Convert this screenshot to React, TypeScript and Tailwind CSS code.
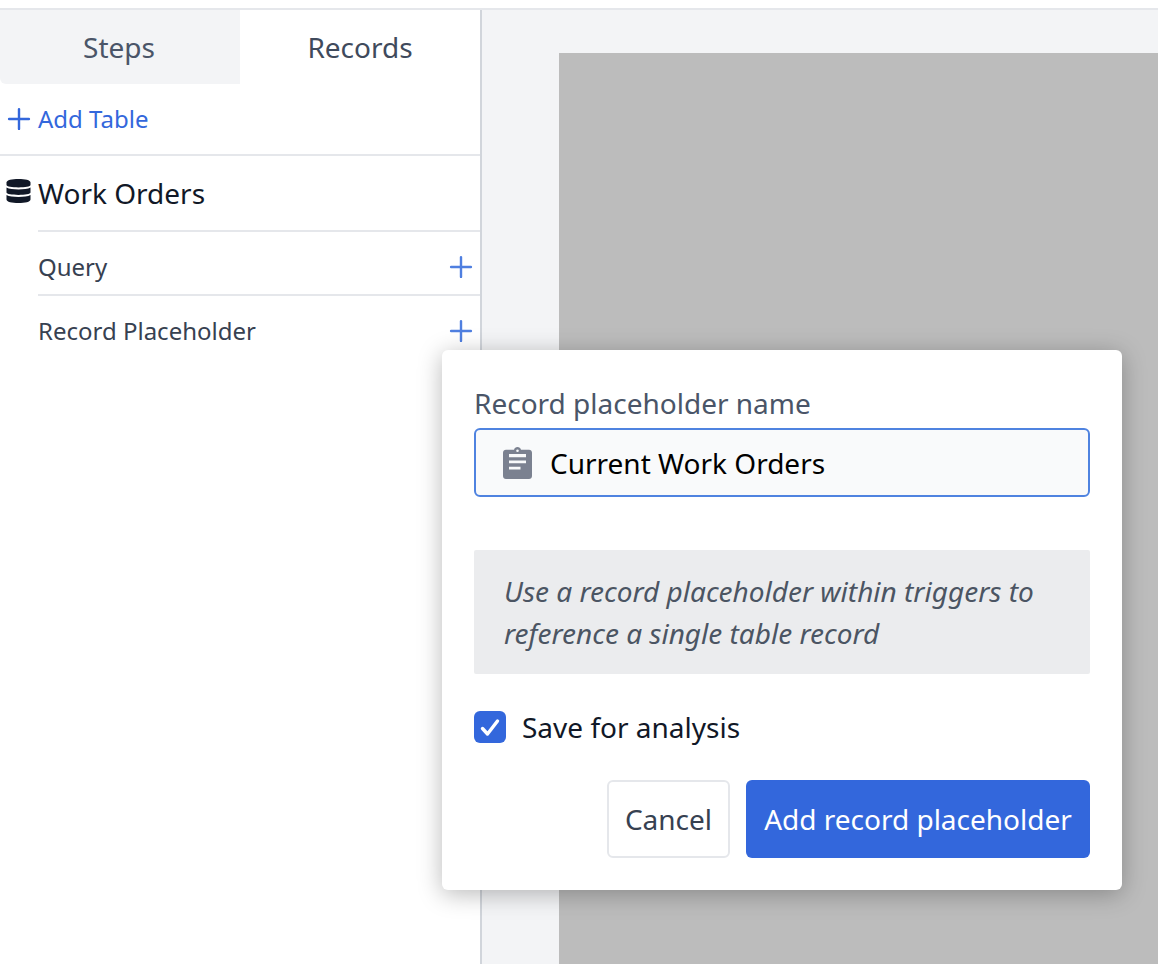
import { Plus } from "lucide-react";

function DbIcon() {
  return (
    <svg viewBox="0 0 25 24" className="w-[25px] h-[24px] text-[#111827]" fill="currentColor">
      <path d="M12.500 0C6 0 .5 1 .5 3.500V6c0 1.500 5.500 2.400 12 2.400S24.500 7.500 24.500 6V3.500C24.500 1 19 0 12.500 0z" />
      <path d="M.5 8.500v5c0 1.500 5.500 2.400 12 2.400s12-.9 12-2.400v-5c-2.400 1.400-7.300 1.900-12 1.900S2.900 9.900.5 8.500z" />
      <path d="M.5 16v4.500C.5 23 6 24 12.500 24s12-1 12-3.500V16c-2.400 1.400-7.300 1.900-12 1.900S2.900 17.400.5 16z" />
    </svg>
  );
}

function ClipboardIcon() {
  return (
    <svg viewBox="0 0 29 32" className="w-[29px] h-[32px] text-[#7b8190]" fill="currentColor">
      <path d="M14.500 0c1.700 0 3 1.100 3.500 2.700h8C27.700 2.700 29 4 29 5.700V29c0 1.700-1.300 3-3 3H3c-1.700 0-3-1.300-3-3V5.700c0-1.700 1.300-3 3-3h8C11.500 1.100 12.800 0 14.500 0zm0 2.400a1.300 1.300 0 1 0 0 2.600 1.300 1.300 0 0 0 0-2.600zM6 7v3.200h17V7H6zm0 6.500v2.800h17v-2.800H6zm0 6.300v2.800h11.500v-2.800H6z" fillRule="evenodd" />
    </svg>
  );
}

function Row({ label }: { label: string }) {
  return (
    <div className="flex items-center justify-between h-[62px] pt-[8px] pr-[2px] text-[24px] text-[#374151]">
      <span>{label}</span>
      <Plus className="w-[34px] h-[34px] text-[#4f7fe0]" strokeWidth={1.7} />
    </div>
  );
}

export default function App() {
  return (
    <div className="relative w-[1158px] h-[964px] overflow-hidden bg-white font-['Noto_Sans',sans-serif]">
      <div className="h-[10px] border-b-2 border-[#e5e7eb]" />
      <div className="flex h-[954px]">
        <div className="w-[482px] shrink-0 border-r-2 border-[#d1d5db]">
          <div className="flex h-[74px] text-[28px] text-[#4a5568]">
            <div className="w-[240px] flex items-center justify-center bg-[#f3f4f6] rounded-bl-md pr-[2px]">Steps</div>
            <div className="w-[240px] flex items-center justify-center text-[#3f4a5c]">Records</div>
          </div>
          <div className="flex items-center h-[72px] border-b-2 border-[#e5e7eb] text-[24px] text-[#3367dc]">
            <Plus className="w-[34px] h-[34px] mx-[2px]" strokeWidth={1.7} />
            <span>Add Table</span>
          </div>
          <div className="flex items-center gap-[7px] h-[74px] pl-[6px] text-[28px] text-[#111827]">
            <span className="-mt-[4px]"><DbIcon /></span>
            <span>Work Orders</span>
          </div>
          <div className="ml-[38px]">
            <div className="border-t-2 border-[#e5e7eb]"><Row label="Query" /></div>
            <div className="border-t-2 border-[#e5e7eb]"><Row label="Record Placeholder" /></div>
          </div>
        </div>
        <div className="flex-1 bg-[#f3f4f6] pl-[77px] pt-[43px]">
          <div className="h-full bg-[#bcbcbc]" />
        </div>
      </div>

      <div className="absolute left-[442px] top-[350px] w-[680px] h-[540px] bg-white rounded-[6px] shadow-[0_4px_24px_rgba(0,0,0,0.28)] px-[32px] pt-[33px]">
        <div className="h-[45px] text-[28px] leading-[40px] text-[#4a5568]">Record placeholder name</div>
        <div className="flex items-center gap-[18px] h-[69px] pl-[27px] rounded-[6px] border-2 border-[#4f83e0] bg-[#f9fafb] text-[28px] text-black">
          <ClipboardIcon />
          <span>Current Work Orders</span>
        </div>
        <div className="mt-[53px] h-[124px] flex items-center px-[30px] bg-[#ebecee] rounded-[2px] text-[28px] leading-[42px] italic text-[#4b5563]">
          <p>Use a record placeholder within triggers to<br />reference a single table record</p>
        </div>
        <div className="flex items-center gap-[16px] mt-[37px] h-[32px] text-[28px] text-[#111827]">
          <span className="flex items-center justify-center w-[32px] h-[32px] rounded-[6px] bg-[#3367dc]">
            <svg viewBox="0 0 32 32" className="w-[32px] h-[32px]" fill="none" stroke="white" strokeWidth="3.4" strokeLinecap="round" strokeLinejoin="round">
              <path d="M8.500 17.500l5 5.500 10-13" />
            </svg>
          </span>
          <span>Save for analysis</span>
        </div>
        <div className="flex justify-end gap-[16px] mt-[37px] text-[28px]">
          <button className="h-[78px] w-[123px] rounded-[6px] border-2 border-[#e5e7eb] bg-white text-[#374151]">Cancel</button>
          <button className="h-[78px] w-[344px] rounded-[6px] bg-[#3367dc] text-white">Add record placeholder</button>
        </div>
      </div>
    </div>
  );
}
